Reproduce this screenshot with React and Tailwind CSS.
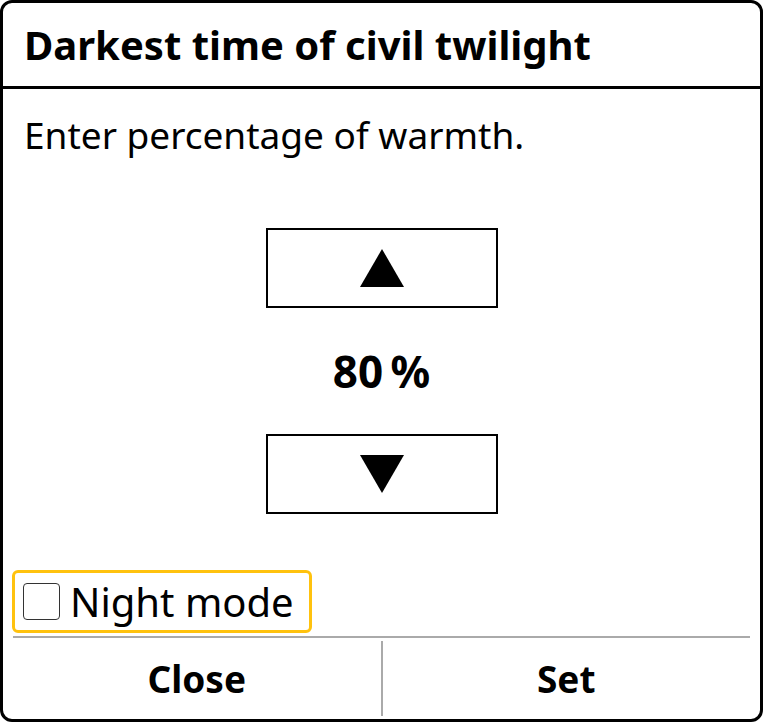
export default function App() {
  return (
    <div className="w-[764px] h-[723px] bg-white font-['Noto_Sans',sans-serif] text-black">
      <div className="w-[763px] h-[722px] border-[3px] border-black rounded-[12px] flex flex-col overflow-hidden">
        <div className="h-[86px] shrink-0 border-b-[3px] border-black flex items-center pl-[21px] text-[40px] font-bold leading-none">
          Darkest time of civil twilight
        </div>
        <div className="pl-[21px] pt-[22px] text-[37px] leading-[48px]">
          Enter percentage of warmth.
        </div>
        <div className="flex flex-col items-center mt-[69px]">
          <div className="w-[232px] h-[80px] border-2 border-black flex items-center justify-center">
            <svg width="44" height="38" viewBox="0 0 44 38">
              <polygon points="22,0 44,38 0,38" fill="black" />
            </svg>
          </div>
          <div className="h-[126px] flex items-center justify-center text-[44px] font-bold">
            {"80\u202F%"}
          </div>
          <div className="w-[232px] h-[80px] border-2 border-black flex items-center justify-center">
            <svg width="44" height="38" viewBox="0 0 44 38">
              <polygon points="0,0 44,0 22,38" fill="black" />
            </svg>
          </div>
        </div>
        <div className="mt-[56px] ml-[9px] w-[300px] h-[63px] shrink-0 border-[3px] border-[#ffc20e] rounded-[6px] flex items-center pl-[8px] gap-[10px]">
          <span className="w-[37px] h-[37px] border-[1.5px] border-[#333] rounded-[4px] shrink-0" />
          <span className="text-[40px] leading-none">Night mode</span>
        </div>
        <div className="mx-[10px] mt-[3px] border-t-2 border-[#aaaaaa] flex flex-1">
          <div className="flex-1 flex items-center justify-center font-bold text-[37px]">Close</div>
          <div className="w-[2px] bg-[#aaaaaa] my-[3px]" />
          <div className="flex-1 flex items-center justify-center font-bold text-[37px]">Set</div>
        </div>
      </div>
    </div>
  );
}
